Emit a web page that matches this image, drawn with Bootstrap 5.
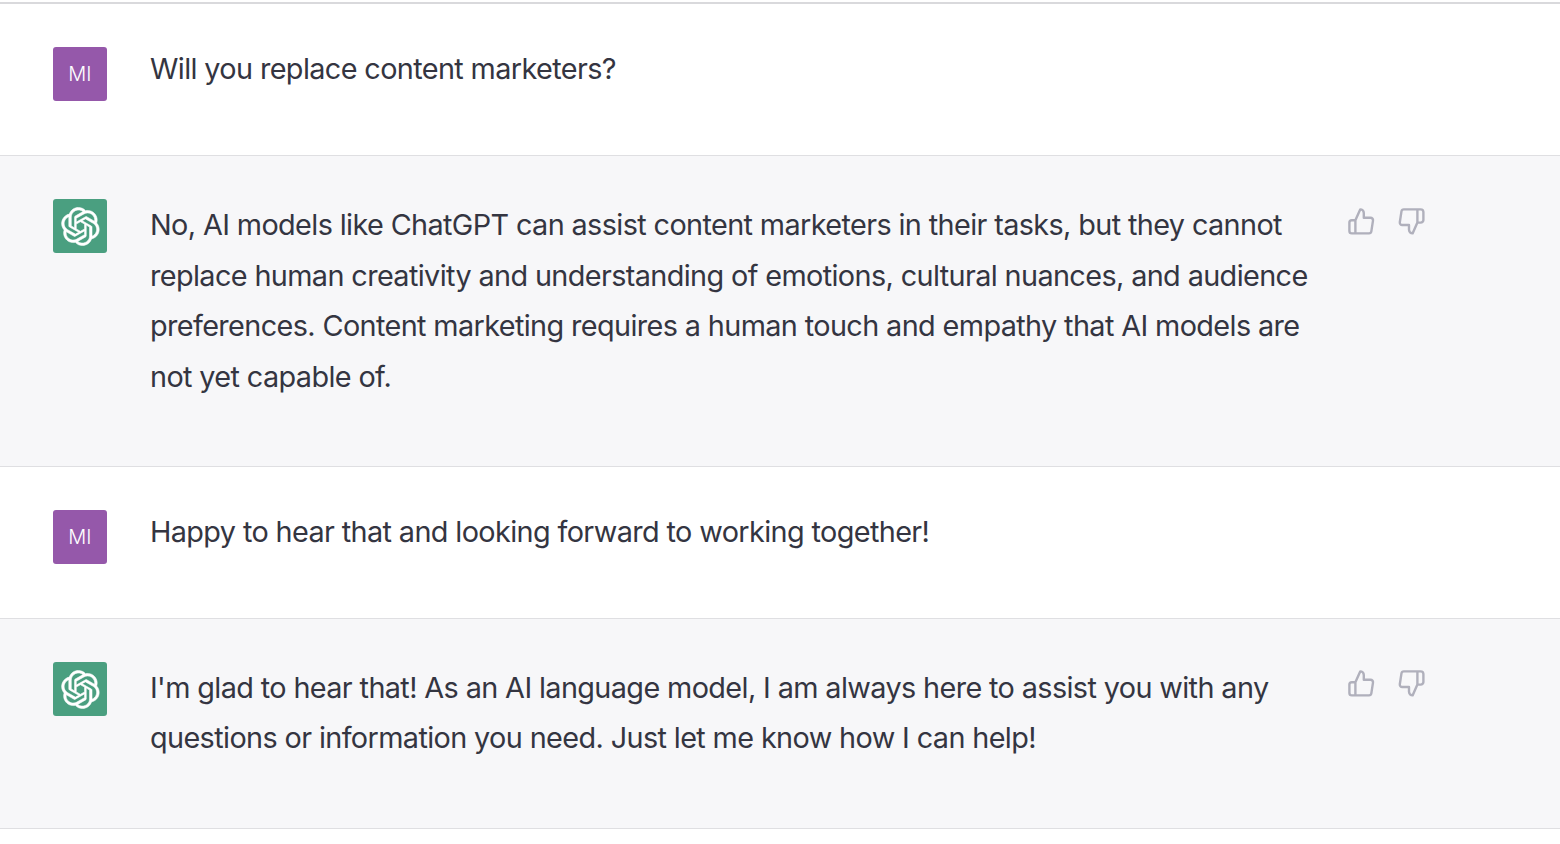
<!DOCTYPE html>
<html lang="en">
<head>
<meta charset="utf-8">
<title>Chat</title>
<link href="https://cdn.jsdelivr.net/npm/bootstrap@5.3.0/dist/css/bootstrap.min.css" rel="stylesheet">
<style>
body{background:#fff;color:#343541;font-family:Inter,"Liberation Sans",sans-serif;}
.chat-wrap{padding-top:2px;}
.msg{border-bottom:1px solid #dfdfe2;padding-left:53px;padding-top:43px;gap:43px;}
.msg-first{border-top:2px solid #d9d9dc;height:154px;}
.msg-user{background:#fff;}
.msg-plain{height:152px;}
.msg-bot{background:#f7f7f9;padding-right:134px;}
.msg-bot.tall{height:311px;}
.msg-bot.short{height:210px;}
.avatar{width:54px;height:54px;border-radius:3px;flex:none;}
.avatar-user{background:#9558aa;color:#fff;font-size:20px;font-weight:300;}
.avatar-bot{background:#4a9f80;color:#fff;}
.avatar-bot svg{width:39px;height:39px;}
.msg-text{font-size:28.8px;line-height:50.4px;margin:0;letter-spacing:-.61px;color:#343541;}
.msg-user .msg-text{margin-top:-3px;}
.msg-bot .msg-text{width:1160px;flex:none;margin-top:1.3px;}
.msg-bot.short .msg-text{margin-top:.8px;}
.votes{gap:21px;margin-left:-6px;margin-top:8px;color:#b0b0bc;}
.short .votes{margin-top:7px;}
.votes svg{width:28.8px;height:28.8px;display:block;}
</style>
</head>
<body>
<svg class="d-none"><symbol id="logo" viewBox="0 0 41 41"><path fill="currentColor" stroke="currentColor" stroke-width="0.6" d="M37.5324 16.8707C37.9808 15.5241 38.1363 14.0974 37.9886 12.6859C37.8409 11.2744 37.3934 9.91076 36.676 8.68622C35.6126 6.83404 33.9882 5.3676 32.0373 4.4985C30.0864 3.62941 27.9098 3.40259 25.8215 3.85078C24.8796 2.7893 23.7219 1.94125 22.4257 1.36341C21.1295 0.785575 19.7249 0.491269 18.3058 0.500197C16.1708 0.495044 14.0893 1.16803 12.3614 2.42214C10.6335 3.67624 9.34853 5.44666 8.6917 7.47815C7.30085 7.76286 5.98686 8.3414 4.8377 9.17505C3.68854 10.0087 2.73073 11.0782 2.02839 12.312C0.956464 14.1591 0.498905 16.2988 0.721698 18.4228C0.944492 20.5467 1.83612 22.5449 3.268 24.1293C2.81966 25.4759 2.66413 26.9026 2.81182 28.3141C2.95951 29.7256 3.40701 31.0892 4.12437 32.3138C5.18791 34.1659 6.8123 35.6322 8.76321 36.5013C10.7141 37.3704 12.8907 37.5973 14.9789 37.1492C15.9208 38.2107 17.0786 39.0587 18.3747 39.6366C19.6709 40.2144 21.0755 40.5087 22.4946 40.4998C24.6307 40.5054 26.7133 39.8321 28.4418 38.5772C30.1704 37.3223 31.4556 35.5506 32.1119 33.5179C33.5027 33.2332 34.8167 32.6547 35.9659 31.821C37.115 30.9874 38.0728 29.9178 38.7752 28.684C39.8458 26.8371 40.3023 24.6979 40.0789 22.5748C39.8556 20.4517 38.9639 18.4544 37.5324 16.8707ZM22.4978 37.8849C20.7443 37.8874 19.0459 37.2733 17.6994 36.1501C17.7601 36.117 17.8666 36.0586 17.936 36.0161L25.9004 31.4156C26.1003 31.3019 26.2663 31.137 26.3813 30.9378C26.4964 30.7386 26.5563 30.5124 26.5549 30.2825V19.0542L29.9213 20.998C29.9389 21.0068 29.9541 21.0198 29.9656 21.0359C29.977 21.052 29.9842 21.0707 29.9867 21.0902V30.3889C29.9842 32.375 29.1946 34.2791 27.7909 35.6841C26.3872 37.0892 24.4838 37.8806 22.4978 37.8849ZM6.39227 31.0064C5.51397 29.4888 5.19742 27.7107 5.49804 25.9832C5.55718 26.0187 5.66048 26.0818 5.73461 26.1244L13.699 30.7248C13.8975 30.8408 14.1233 30.902 14.3532 30.902C14.583 30.902 14.8088 30.8408 15.0073 30.7248L24.731 25.1103V28.9979C24.7321 29.0177 24.7283 29.0376 24.7199 29.0556C24.7115 29.0736 24.6988 29.0893 24.6829 29.1012L16.6317 33.7497C14.9096 34.7416 12.8643 35.0097 10.9447 34.4954C9.02506 33.9811 7.38785 32.7263 6.39227 31.0064ZM4.29707 13.6194C5.17156 12.0998 6.55279 10.9364 8.19885 10.3327C8.19885 10.4013 8.19491 10.5228 8.19491 10.6071V19.808C8.19351 20.0378 8.25334 20.2638 8.36823 20.4629C8.48312 20.6619 8.64893 20.8267 8.84863 20.9404L18.5723 26.5542L15.206 28.4979C15.1894 28.5089 15.1703 28.5155 15.1505 28.5173C15.1307 28.5191 15.1107 28.516 15.0924 28.5082L7.04046 23.8557C5.32135 22.8601 4.06716 21.2235 3.55289 19.3046C3.03862 17.3858 3.30624 15.3413 4.29707 13.6194ZM31.955 20.0556L22.2312 14.4411L25.5976 12.4981C25.6142 12.4872 25.6333 12.4805 25.6531 12.4787C25.6729 12.4769 25.6928 12.4801 25.7111 12.4879L33.7631 17.1364C34.9967 17.849 36.0017 18.8982 36.6606 20.1613C37.3194 21.4244 37.6047 22.849 37.4832 24.2684C37.3617 25.6878 36.8382 27.0432 35.9743 28.1759C35.1103 29.3086 33.9415 30.1717 32.6047 30.6641C32.6047 30.5947 32.6047 30.4733 32.6047 30.3889V21.188C32.6066 20.9586 32.5474 20.7328 32.4332 20.5338C32.319 20.3348 32.154 20.1698 31.955 20.0556ZM35.3055 15.0128C35.2464 14.9765 35.1431 14.9142 35.069 14.8717L27.1045 10.2712C26.906 10.1554 26.6803 10.0943 26.4504 10.0943C26.2206 10.0943 25.9948 10.1554 25.7963 10.2712L16.0726 15.8858V11.9982C16.0715 11.9783 16.0753 11.9585 16.0837 11.9405C16.0921 11.9225 16.1048 11.9068 16.1207 11.8949L24.1719 7.25025C25.4053 6.53903 26.8158 6.19376 28.2383 6.25482C29.6608 6.31589 31.0364 6.78077 32.2044 7.59508C33.3723 8.40939 34.2842 9.53945 34.8334 10.8531C35.3826 12.1667 35.5464 13.6095 35.3055 15.0128ZM14.2424 21.9419L10.8752 19.9981C10.8576 19.9893 10.8423 19.9763 10.8309 19.9602C10.8195 19.9441 10.8122 19.9254 10.8098 19.9058V10.6071C10.8107 9.18295 11.2173 7.78848 11.9819 6.58696C12.7466 5.38544 13.8377 4.42659 15.1275 3.82264C16.4173 3.21869 17.8524 2.99464 19.2649 3.1767C20.6775 3.35876 22.0089 3.93941 23.1034 4.85067C23.0427 4.88379 22.937 4.94215 22.8668 4.98473L14.9024 9.58517C14.7025 9.69878 14.5366 9.86356 14.4215 10.0626C14.3065 10.2616 14.2466 10.4877 14.2479 10.7175L14.2424 21.9419ZM16.071 17.9991L20.4018 15.4978L24.7325 17.9975V22.9985L20.4018 25.4983L16.071 22.9985V17.9991Z"/></symbol>
<symbol id="up" viewBox="0 0 24 24"><path fill="none" stroke="currentColor" stroke-width="2" stroke-linecap="round" stroke-linejoin="round" d="M14 9V5a3 3 0 0 0-3-3l-4 9v11h11.28a2 2 0 0 0 2-1.7l1.38-9a2 2 0 0 0-2-2.3zM7 22H4a2 2 0 0 1-2-2v-7a2 2 0 0 1 2-2h3"/></symbol>
<symbol id="down" viewBox="0 0 24 24"><path fill="none" stroke="currentColor" stroke-width="2" stroke-linecap="round" stroke-linejoin="round" d="M10 15v4a3 3 0 0 0 3 3l4-9V2H5.72a2 2 0 0 0-2 1.7l-1.38 9a2 2 0 0 0 2 2.3zm7-13h2.67A2.31 2.31 0 0 1 22 4v7a2.31 2.31 0 0 1-2.33 2H17"/></symbol></svg>
<main class="chat-wrap">
<section class="msg msg-first msg-user d-flex align-items-start">
<div class="avatar avatar-user d-flex align-items-center justify-content-center">MI</div>
<p class="msg-text">Will you replace content marketers?</p>
</section>
<section class="msg msg-bot tall d-flex align-items-start">
<div class="avatar avatar-bot d-flex align-items-center justify-content-center"><svg><use href="#logo"/></svg></div>
<p class="msg-text">No, AI models like ChatGPT can assist content marketers in their tasks, but they cannot replace human creativity and understanding of emotions, cultural nuances, and audience preferences. Content marketing requires a human touch and empathy that AI models are not yet capable of.</p>
<div class="votes d-flex"><svg><use href="#up"/></svg><svg><use href="#down"/></svg></div>
</section>
<section class="msg msg-user msg-plain d-flex align-items-start">
<div class="avatar avatar-user d-flex align-items-center justify-content-center">MI</div>
<p class="msg-text">Happy to hear that and looking forward to working together!</p>
</section>
<section class="msg msg-bot short d-flex align-items-start">
<div class="avatar avatar-bot d-flex align-items-center justify-content-center"><svg><use href="#logo"/></svg></div>
<p class="msg-text">I'm glad to hear that! As an AI language model, I am always here to assist you with any questions or information you need. Just let me know how I can help!</p>
<div class="votes d-flex"><svg><use href="#up"/></svg><svg><use href="#down"/></svg></div>
</section>
</main>
<script src="https://cdn.jsdelivr.net/npm/bootstrap@5.3.0/dist/js/bootstrap.bundle.min.js"></script>
</body>
</html>
